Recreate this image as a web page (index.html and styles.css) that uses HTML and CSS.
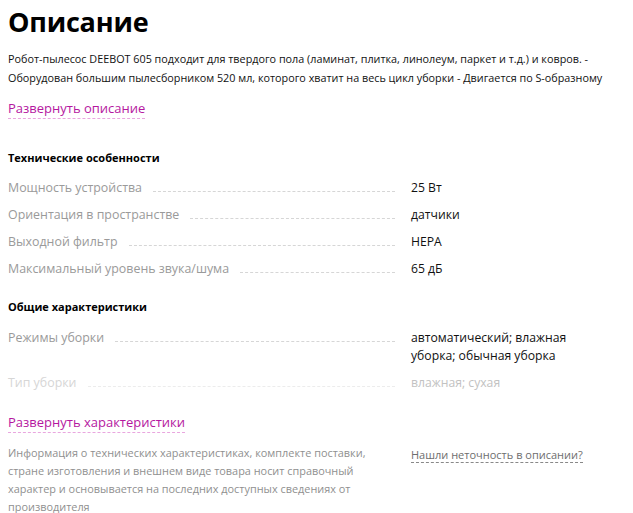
FILE: index.html
```html
<!DOCTYPE html>
<html lang="ru">
<head>
<meta charset="utf-8">
<link rel="stylesheet" href="styles.css">
</head>
<body>
<div class="page">
  <h1 class="title">Описание</h1>
  <p class="desc">Робот-пылесос DEEBOT 605 подходит для твердого пола (ламинат, плитка, линолеум, паркет и т.д.) и ковров. - Оборудован большим пылесборником 520 мл, которого хватит на весь цикл уборки - Двигается по S-образному</p>
  <div class="more"><span class="link">Развернуть описание</span></div>

  <h3 class="group">Технические особенности</h3>
  <div class="specs">
    <div class="row"><div class="name"><span class="label">Мощность устройства</span><span class="dots"></span></div><span class="value">25 Вт</span></div>
    <div class="row"><div class="name"><span class="label">Ориентация в пространстве</span><span class="dots"></span></div><span class="value">датчики</span></div>
    <div class="row"><div class="name"><span class="label">Выходной фильтр</span><span class="dots"></span></div><span class="value">HEPA</span></div>
    <div class="row"><div class="name"><span class="label">Максимальный уровень звука/шума</span><span class="dots"></span></div><span class="value">65 дБ</span></div>
  </div>

  <h3 class="group group2">Общие характеристики</h3>
  <div class="specs specs2">
    <div class="row"><div class="name"><span class="label">Режимы уборки</span><span class="dots"></span></div><span class="value">автоматический; влажная уборка; обычная уборка</span></div>
    <div class="row faded"><div class="name"><span class="label">Тип уборки</span><span class="dots"></span></div><span class="value">влажная; сухая</span></div>
  </div>
  <div class="more more2"><span class="link">Развернуть характеристики</span></div>

  <div class="footer">
    <p class="note">Информация о технических характеристиках, комплекте поставки, стране изготовления и внешнем виде товара носит справочный характер и основывается на последних доступных сведениях от производителя</p>
    <div class="report"><span class="report-link">Нашли неточность в описании?</span></div>
  </div>
</div>
</body>
</html>
```
FILE: styles.css
```css
html, body {
  margin: 0;
  padding: 0;
  background: #fff;
}
body {
  font-family: "Open Sans", "Noto Sans", sans-serif;
  color: #000;
}
.page {
  padding: 0 8px;
}
.title {
  font-size: 27px;
  font-weight: 700;
  line-height: 40px;
  margin: 0;
  padding-top: 2px;
  letter-spacing: -0.2px;
}
.desc {
  font-size: 10.8px;
  line-height: 19px;
  margin: 7px 0 0 0;
  color: #111;
}
.more {
  margin-top: 10px;
  line-height: 20px;
}
.link {
  font-size: 13px;
  color: #b5179f;
  border-bottom: 1px dashed #e9a6df;
  padding-bottom: 1px;
}
.group {
  font-size: 11px;
  font-weight: 700;
  margin: 32px 0 0 0;
  line-height: 16px;
}
.group2 {
  margin-top: 16px;
}
.specs {
  margin-top: 9px;
}
.specs2 {
  margin-top: 10px;
}
.row {
  display: flex;
  align-items: flex-start;
  gap: 16px;
  padding: 3px 0 4px;
  line-height: 20px;
}
.row + .faded {
  padding-top: 4px;
}
.name {
  width: 387px;
  flex: none;
  display: flex;
  align-items: flex-start;
}
.label {
  font-size: 12.4px;
  color: #9a9a9a;
  white-space: nowrap;
}
.dots {
  flex: 1;
  border-bottom: 1px dashed #d6d6d6;
  margin-left: 11px;
  height: 13px;
}
.value {
  width: 165px;
  flex: none;
  font-size: 12.2px;
  color: #111;
  line-height: 18px;
  padding-top: 1px;
}
.faded .label { color: #d6d6d6; }
.faded .dots { border-bottom-color: #ececec; }
.faded .value { color: #c2c2c2; }
.more2 {
  margin-top: 14px;
}
.footer {
  display: flex;
  margin-top: 12px;
}
.note {
  width: 380px;
  font-size: 10.9px;
  line-height: 18px;
  color: #8f8f8f;
  margin: 0;
}
.report {
  margin-left: 23px;
  line-height: 18px;
}
.report-link {
  font-size: 11px;
  color: #6e6e6e;
  border-bottom: 1px dashed #888;
}
```
